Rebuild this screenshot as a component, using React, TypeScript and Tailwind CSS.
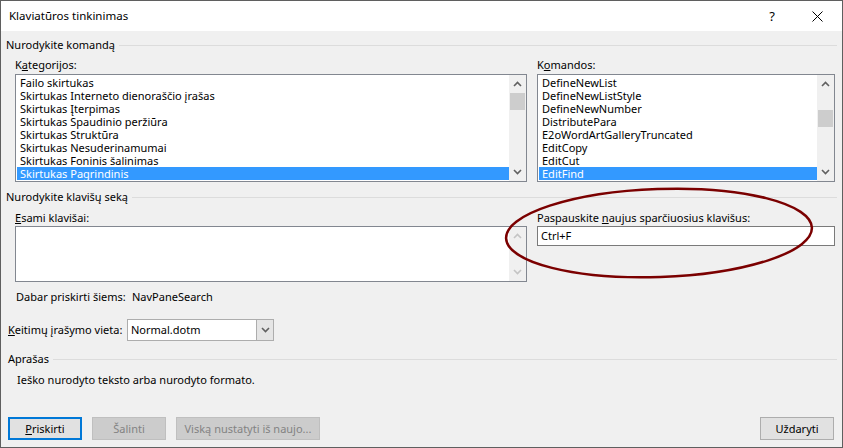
import React from "react";

const kategorijos = [
  "Failo skirtukas",
  "Skirtukas Interneto dienoraščio įrašas",
  "Skirtukas Įterpimas",
  "Skirtukas Spaudinio peržiūra",
  "Skirtukas Struktūra",
  "Skirtukas Nesuderinamumai",
  "Skirtukas Foninis šalinimas",
  "Skirtukas Pagrindinis",
];

const komandos = [
  "DefineNewList",
  "DefineNewListStyle",
  "DefineNewNumber",
  "DistributePara",
  "E2oWordArtGalleryTruncated",
  "EditCopy",
  "EditCut",
  "EditFind",
];

function Chevron({ up, disabled }: { up?: boolean; disabled?: boolean }) {
  return (
    <svg width="9" height="6" viewBox="0 0 9 6">
      <path
        d={up ? "M1 5 L4.5 1.5 L8 5" : "M1 1 L4.5 4.5 L8 1"}
        fill="none"
        stroke={disabled ? "#c4c4c4" : "#606060"}
        strokeWidth="1.6"
      />
    </svg>
  );
}

// 세로 스크롤바
function ScrollBar({ thumbTop, disabled }: { thumbTop?: string; disabled?: boolean }) {
  return (
    <div className="w-[17px] h-full bg-[#f0f0f0] flex flex-col items-center justify-between py-[6px] relative">
      <Chevron up disabled={disabled} />
      {thumbTop && (
        <div className={`absolute left-px w-[15px] h-[17px] bg-[#cdcdcd] ${thumbTop}`} />
      )}
      <Chevron disabled={disabled} />
    </div>
  );
}

function ListBox({ items, width, thumbTop }: { items: string[]; width: string; thumbTop: string }) {
  return (
    <div className={`${width} h-[108px] border border-[#828790] bg-white flex`}>
      <div className="flex-1 pt-px pl-px overflow-hidden">
        {items.map((item, i) => (
          <div
            key={item}
            className={`h-[13px] leading-[13px] pl-[3px] whitespace-nowrap ${
              i === items.length - 1 ? "bg-[#3399ff] text-white" : ""
            }`}
          >
            {item}
          </div>
        ))}
      </div>
      <ScrollBar thumbTop={thumbTop} />
    </div>
  );
}

function GroupHeader({ title }: { title: string }) {
  return (
    <div className="h-[16px] flex items-center gap-[4px]">
      <span className="whitespace-nowrap">{title}</span>
      <div className="flex-1 h-px bg-[#dcdcdc]" />
    </div>
  );
}

function Button({ label, primary, disabled, width }: { label: React.ReactNode; primary?: boolean; disabled?: boolean; width: string }) {
  return (
    <div
      className={`${width} h-[23px] flex items-center justify-center ${
        primary
          ? "border-2 border-[#0078d7] bg-[#e1e1e1]"
          : disabled
          ? "border border-[#bfbfbf] bg-[#cccccc] text-[#838383]"
          : "border border-[#adadad] bg-[#e1e1e1]"
      }`}
    >
      {label}
    </div>
  );
}

export default function App() {
  return (
    <div className="relative w-[843px] h-[448px] border border-[#5f5f5f] bg-[#f0f0f0] flex flex-col text-[11px] text-black font-['Noto_Sans',sans-serif] leading-[16px]">
      {/* 타이틀 바 */}
      <div className="h-[30px] bg-white flex items-center pl-[8px] text-[11.5px]">
        <span className="flex-1">Klaviatūros tinkinimas</span>
        <span className="w-[20px] text-center mr-[30px] text-[13px]">?</span>
        <svg width="11" height="11" viewBox="0 0 11 11" className="mr-[19px]">
          <path d="M0.5 0.5 L10.5 10.5 M10.5 0.5 L0.5 10.5" stroke="#000" strokeWidth="1" />
        </svg>
      </div>

      {/* 본문 */}
      <div className="flex-1 flex flex-col pl-[5px] pr-[5px] pt-[6px]">
        <GroupHeader title="Nurodykite komandą" />

        <div className="flex gap-[10px] pl-[9px] mt-[4px]">
          <div className="flex flex-col">
            <div className="h-[17px]">
              K<span className="underline">a</span>tegorijos:
            </div>
            <ListBox items={kategorijos} width="w-[512px]" thumbTop="top-[18px]" />
          </div>
          <div className="flex flex-col">
            <div className="h-[17px]">
              K<span className="underline">o</span>mandos:
            </div>
            <ListBox items={komandos} width="w-[298px]" thumbTop="top-[35px]" />
          </div>
        </div>

        <div className="mt-[7px]">
          <GroupHeader title="Nurodykite klavišų seką" />
        </div>

        <div className="flex gap-[10px] pl-[9px] mt-[5px]">
          <div className="flex flex-col">
            <div className="h-[16px]">
              <span className="underline">E</span>sami klavišai:
            </div>
            <div className="w-[512px] h-[56px] border border-[#828790] bg-white flex justify-end">
              <ScrollBar disabled />
            </div>
          </div>
          <div className="flex flex-col">
            <div className="h-[16px]">
              Paspauskite <span className="underline">n</span>aujus sparčiuosius klavišus:
            </div>
            <div className="w-[298px] h-[20px] border border-[#7a7a7a] bg-white flex items-center pl-[3px]">
              Ctrl+F
            </div>
          </div>
        </div>

        <div className="mt-[7px] pl-[10px] flex">
          <span className="w-[116px]">Dabar priskirti šiems:</span>
          <span>NavPaneSearch</span>
        </div>

        <div className="mt-[14px] flex items-center pl-[2px]">
          <span className="w-[119px]">
            <span className="underline">K</span>eitimų įrašymo vieta:
          </span>
          <div className="w-[147px] h-[22px] border border-[#adadad] bg-white flex">
            <span className="flex-1 pl-[3px] leading-[20px]">Normal.dotm</span>
            <div className="w-[17px] h-full bg-[#e5e5e5] border-l border-[#adadad] flex items-center justify-center">
              <Chevron />
            </div>
          </div>
        </div>

        <div className="mt-[10px] pl-[2px]">
          <GroupHeader title="Aprašas" />
        </div>
        <div className="mt-[5px] pl-[11px]">Ieško nurodyto teksto arba nurodyto formato.</div>

        {/* 하단 버튼 */}
        <div className="mt-[29px] flex pl-[2px] pr-[3px] gap-[10px]">
          <Button
            width="w-[74px]"
            primary
            label={
              <span>
                <span className="underline">P</span>riskirti
              </span>
            }
          />
          <Button width="w-[74px]" disabled label="Šalinti" />
          <Button width="w-[144px]" disabled label="Viską nustatyti iš naujo..." />
          <div className="flex-1" />
          <Button width="w-[74px]" label="Uždaryti" />
        </div>
      </div>

      {/* 빨간 타원 표시 */}
      <svg className="absolute left-0 top-0 pointer-events-none" width="843" height="448">
        <ellipse cx="658" cy="232" rx="153" ry="44" transform="rotate(-2 658 232)" fill="none" stroke="#7b0000" strokeWidth="2.5" />
      </svg>
    </div>
  );
}
